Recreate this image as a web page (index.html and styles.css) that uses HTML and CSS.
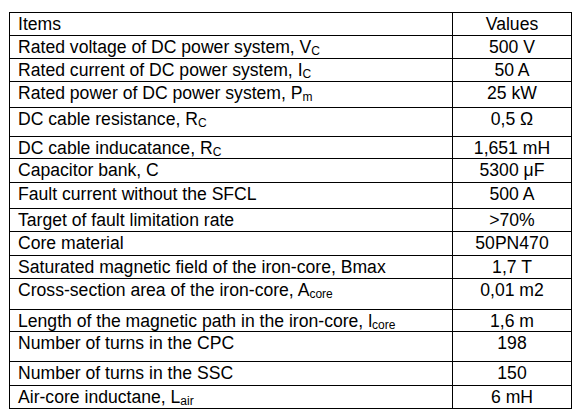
FILE: index.html
```html
<!DOCTYPE html>
<html lang="en">

<head>
    <meta charset="UTF-8">
    <title>Parameters</title>
    <link rel="stylesheet" href="styles.css">
</head>

<body>
    <table class="params">
        <tr>
            <td class="name">Items</td>
            <td class="value">Values</td>
        </tr>
        <tr>
            <td class="name">Rated voltage of DC power system, V<sub>C</sub></td>
            <td class="value">500 V</td>
        </tr>
        <tr>
            <td class="name">Rated current of DC power system, I<sub>C</sub></td>
            <td class="value">50 A</td>
        </tr>
        <tr class="r26">
            <td class="name">Rated power of DC power system, P<sub>m</sub></td>
            <td class="value">25 kW</td>
        </tr>
        <tr class="r29">
            <td class="name">DC cable resistance, R<sub>C</sub></td>
            <td class="value">0,5 Ω</td>
        </tr>
        <tr class="r22">
            <td class="name">DC cable inducatance, R<sub>C</sub></td>
            <td class="value">1,651 mH</td>
        </tr>
        <tr class="r24">
            <td class="name">Capacitor bank, C</td>
            <td class="value">5300 μF</td>
        </tr>
        <tr class="r26">
            <td class="name">Fault current without the SFCL</td>
            <td class="value">500 A</td>
        </tr>
        <tr>
            <td class="name">Target of fault limitation rate</td>
            <td class="value">&gt;70%</td>
        </tr>
        <tr class="r24">
            <td class="name">Core material</td>
            <td class="value">50PN470</td>
        </tr>
        <tr>
            <td class="name">Saturated magnetic field of the iron-core, Bmax</td>
            <td class="value">1,7 T</td>
        </tr>
        <tr class="r31">
            <td class="name">Cross-section area of the iron-core, A<sub>core</sub></td>
            <td class="value">0,01 m2</td>
        </tr>
        <tr class="r22">
            <td class="name">Length of the magnetic path in the iron-core, l<sub>core</sub></td>
            <td class="value">1,6 m</td>
        </tr>
        <tr class="r30">
            <td class="name">Number of turns in the CPC</td>
            <td class="value">198</td>
        </tr>
        <tr class="r24">
            <td class="name">Number of turns in the SSC</td>
            <td class="value">150</td>
        </tr>
        <tr>
            <td class="name">Air-core inductane, L<sub>air</sub></td>
            <td class="value">6 mH</td>
        </tr>
    </table>
</body>

</html>
```

FILE: styles.css
```css
body {
    margin: 0;
    background: white;
    font-family: "Liberation Sans", Arial, sans-serif;
    font-size: 17.6px;
    color: black;
}

.params {
    border-collapse: collapse;
    margin: 12px 0 0 9px;
    width: 563px;
}

.params tr {
    height: 23px;
}

.params td {
    border: 1px solid black;
    padding: 2px 8px 0;
    vertical-align: top;
    line-height: 19px;
    white-space: nowrap;
}

.params .value {
    width: 102px;
    text-align: center;
}

sub {
    font-size: 12px;
    line-height: 0;
    vertical-align: -2px;
}

.params .r22 {
    height: 22px;
}

.params .r24 {
    height: 24px;
}

.params .r26 {
    height: 26px;
}

.params .r29 {
    height: 29px;
}

.params .r30 {
    height: 30px;
}

.params .r31 {
    height: 31px;
}
```
